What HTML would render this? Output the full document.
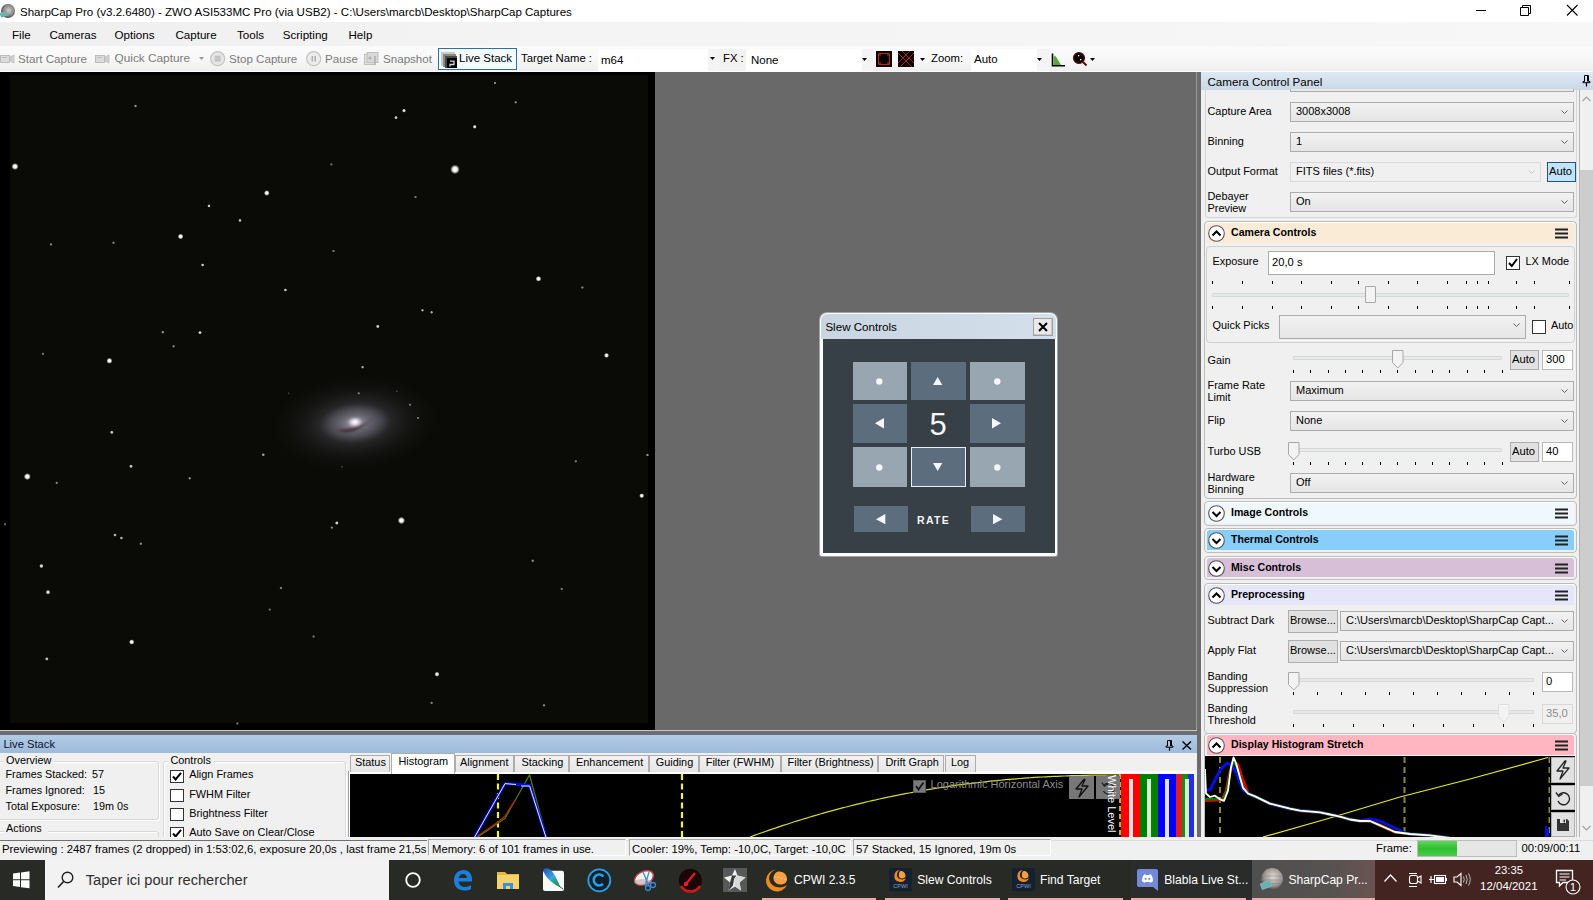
<!DOCTYPE html>
<html><head><meta charset="utf-8"><style>
*{margin:0;padding:0;box-sizing:border-box}
html,body{width:1593px;height:900px;overflow:hidden;background:#f0f0f0;font-family:"Liberation Sans", sans-serif;position:relative}
.t{position:absolute;white-space:nowrap;line-height:1;font-family:"Liberation Sans", sans-serif}
.a{position:absolute}
svg{position:absolute;overflow:visible}
</style></head>
<body>
<div style="position:absolute;left:0px;top:0px;width:1593px;height:22px;background:#fff"></div><svg style="left:0;top:3px" width="16" height="16"><defs><radialGradient id="pl" cx="55%" cy="45%" r="60%"><stop offset="0" stop-color="#cfcfcf"/><stop offset="0.6" stop-color="#8a8a8a"/><stop offset="1" stop-color="#3a3a3a"/></radialGradient></defs><circle cx="8" cy="8" r="7" fill="url(#pl)"/><rect x="0" y="9" width="7" height="5" fill="#6fb3a8" transform="rotate(-20 3 11)"/></svg><div class="t" style="left:20px;top:6.94px;font-size:11.55px;color:#000;">SharpCap Pro (v3.2.6480) - ZWO ASI533MC Pro (via USB2) - C:\Users\marcb\Desktop\SharpCap Captures</div><div style="position:absolute;left:1476px;top:10px;width:10px;height:1px;background:#000"></div><svg style="left:1520px;top:5px" width="12" height="11"><path d="M0.5 2.5h8v8h-8z M2.5 2.5v-2h8v8h-2" fill="none" stroke="#000" stroke-width="1"/></svg><svg style="left:1567px;top:5px" width="11" height="11"><path d="M0 0L10.5 10.5M10.5 0L0 10.5" stroke="#000" stroke-width="1.1"/></svg><div style="position:absolute;left:0px;top:22px;width:1593px;height:24px;background:linear-gradient(90deg,#efefef,#f4f4f4 40%,#f7f7f7)"></div><div class="t" style="left:12px;top:29.24px;font-size:11.6px;color:#000;">File</div><div class="t" style="left:49.5px;top:29.24px;font-size:11.6px;color:#000;">Cameras</div><div class="t" style="left:114.6px;top:29.24px;font-size:11.6px;color:#000;">Options</div><div class="t" style="left:175.4px;top:29.24px;font-size:11.6px;color:#000;">Capture</div><div class="t" style="left:237px;top:29.24px;font-size:11.6px;color:#000;">Tools</div><div class="t" style="left:282.7px;top:29.24px;font-size:11.6px;color:#000;">Scripting</div><div class="t" style="left:348.5px;top:29.24px;font-size:11.6px;color:#000;">Help</div><div style="position:absolute;left:0px;top:46px;width:1593px;height:25px;background:linear-gradient(#fbfbfb,#f8f8f8 50%,#efefef)"></div><div style="position:absolute;left:0px;top:71px;width:1593px;height:1px;background:#fdfdfd"></div><svg style="left:0px;top:53px" width="15" height="12"><rect x="0.5" y="2.5" width="9" height="7" fill="#dcdcdc" stroke="#bdbdbd"/><path d="M10 4l4-2v8l-4-2z" fill="#cfcfcf" stroke="#bdbdbd" stroke-width="0.8"/><rect x="2" y="4" width="5" height="1" fill="#bdbdbd"/></svg><div class="t" style="left:18px;top:53.14px;font-size:11.6px;color:#7a7a7a;">Start Capture</div><svg style="left:95px;top:53px" width="15" height="12"><rect x="0.5" y="2.5" width="9" height="7" fill="#dcdcdc" stroke="#bdbdbd"/><path d="M10 4l4-2v8l-4-2z" fill="#cfcfcf" stroke="#bdbdbd" stroke-width="0.8"/><rect x="2" y="4" width="5" height="1" fill="#bdbdbd"/></svg><div class="t" style="left:114.6px;top:53.11px;font-size:11.8px;color:#7a7a7a;">Quick Capture</div><svg style="left:199px;top:57px" width="6" height="4"><path d="M0 0h5l-2.5 3z" fill="#9a9a9a"/></svg><svg style="left:210px;top:51px" width="16" height="16"><circle cx="7.7" cy="7.7" r="7" fill="#e6e6e6" stroke="#c4c4c4" stroke-width="1.2"/><rect x="4.7" y="4.7" width="6" height="6" fill="#c4c4c4"/></svg><div class="t" style="left:229px;top:53.14px;font-size:11.6px;color:#7a7a7a;">Stop Capture</div><svg style="left:306px;top:51px" width="16" height="16"><circle cx="7.7" cy="7.7" r="7" fill="#ececec" stroke="#c4c4c4" stroke-width="1.2"/><rect x="5.5" y="5" width="1.6" height="5.5" fill="#b0b0b0"/><rect x="8.4" y="5" width="1.6" height="5.5" fill="#b0b0b0"/></svg><div class="t" style="left:325px;top:53.14px;font-size:11.6px;color:#7a7a7a;">Pause</div><svg style="left:364px;top:52px" width="15" height="15"><rect x="0.5" y="2.5" width="11" height="10" fill="#e0e0e0" stroke="#c0c0c0"/><rect x="3" y="0.5" width="11" height="10" fill="#d8d8d8" stroke="#c0c0c0"/><rect x="10" y="4" width="2" height="9" fill="#b8b8b8"/><circle cx="6" cy="6" r="1.5" fill="#b0b0b0"/></svg><div class="t" style="left:383px;top:53.14px;font-size:11.6px;color:#7a7a7a;">Snapshot</div><div style="position:absolute;left:438px;top:48px;width:79px;height:22px;background:#f3fbfd;border:1px solid #2e6fa5"></div><svg style="left:441px;top:52px" width="16" height="16"><rect x="0" y="0" width="14" height="14" fill="#c8c8c8"/><rect x="2" y="2" width="13" height="13" fill="#8a8a8a"/><rect x="4" y="4" width="12" height="12" fill="#4a4a4a"/><rect x="6" y="6" width="10" height="10" fill="#000"/><path d="M9 9.2h4v3.3h-4v2" fill="none" stroke="#d8d8d8" stroke-width="1.3"/></svg><div class="t" style="left:459px;top:53.15px;font-size:11.5px;color:#000;">Live Stack</div><div class="t" style="left:521px;top:53.17px;font-size:11.3px;color:#000;">Target Name :</div><div style="position:absolute;left:598px;top:49px;width:121px;height:22px;background:#fff"></div><div style="position:absolute;left:708px;top:49px;width:11px;height:22px;background:#f4f4f4"></div><div class="t" style="left:601px;top:54.95px;font-size:11.5px;color:#000;">m64</div><svg style="left:710px;top:57px" width="6" height="4"><path d="M0 0h5l-2.5 3z" fill="#000"/></svg><div style="position:absolute;left:719px;top:49px;width:27px;height:22px;background:#f2f2f2"></div><div class="t" style="left:723px;top:53.17px;font-size:11.3px;color:#000;">FX :</div><div style="position:absolute;left:746px;top:49px;width:127px;height:22px;background:#fff"></div><div style="position:absolute;left:862px;top:49px;width:11px;height:22px;background:#f4f4f4"></div><div class="t" style="left:751px;top:54.95px;font-size:11.5px;color:#000;">None</div><svg style="left:862px;top:58px" width="6" height="4"><path d="M0 0h5l-2.5 3z" fill="#000"/></svg><svg style="left:876px;top:51px" width="16" height="16"><rect x="0" y="0" width="16" height="16" fill="#000"/><path d="M2.6 2.6h10.8v10.8h-10.8z" fill="none" stroke="#d42a2a" stroke-width="1"/><rect x="3.3" y="3.3" width="1.4" height="1.4" fill="#d42a2a"/><rect x="11.3" y="3.3" width="1.4" height="1.4" fill="#d42a2a"/><rect x="3.3" y="11.3" width="1.4" height="1.4" fill="#d42a2a"/><rect x="11.3" y="11.3" width="1.4" height="1.4" fill="#d42a2a"/></svg><svg style="left:898px;top:51px" width="16" height="16"><rect x="0" y="0" width="16" height="16" fill="#000"/><path d="M0 2L14 16M4 0L16 12M16 2L2 16M12 0L0 12" fill="none" stroke="#c42020" stroke-width="0.9"/></svg><svg style="left:920px;top:58px" width="6" height="4"><path d="M0 0h5l-2.5 3z" fill="#000"/></svg><div class="t" style="left:931px;top:53.17px;font-size:11.3px;color:#000;">Zoom:</div><div style="position:absolute;left:971px;top:49px;width:79px;height:22px;background:#fff"></div><div style="position:absolute;left:1037px;top:49px;width:13px;height:22px;background:#f4f4f4"></div><div class="t" style="left:974px;top:54.25px;font-size:11.5px;color:#000;">Auto</div><svg style="left:1037px;top:58px" width="6" height="4"><path d="M0 0h5l-2.5 3z" fill="#000"/></svg><svg style="left:1051px;top:52px" width="15" height="15"><path d="M1.5 1.5V13.8H14" fill="none" stroke="#000" stroke-width="1.6"/><path d="M2.5 13V5.5L4 3.5L5.5 5.5L10 13z" fill="#5aa83a"/></svg><svg style="left:1073px;top:52px" width="15" height="15"><circle cx="6" cy="6" r="5.5" fill="#000" stroke="#6a0a0a" stroke-width="1.2"/><rect x="5" y="3" width="1.3" height="1.3" fill="#fff"/><rect x="7" y="7" width="1.3" height="1.3" fill="#fff"/><path d="M10 10L13.5 13.5" stroke="#5a0808" stroke-width="2"/></svg><svg style="left:1090px;top:58px" width="6" height="4"><path d="M0 0h5l-2.5 3z" fill="#000"/></svg><div style="position:absolute;left:0px;top:72px;width:655px;height:658px;background:#000"></div><div style="position:absolute;left:10px;top:75px;width:638px;height:648px;background:#0a0a06"></div><svg style="left:0;top:0" width="655" height="730"><defs><radialGradient id="sg"><stop offset="0" stop-color="#fff"/><stop offset="0.45" stop-color="#f4f4f4"/><stop offset="1" stop-color="#fff" stop-opacity="0"/></radialGradient><radialGradient id="gh" cx="50%" cy="50%" r="50%"><stop offset="0" stop-color="#8a8690" stop-opacity="0.45"/><stop offset="0.4" stop-color="#5c5860" stop-opacity="0.25"/><stop offset="1" stop-color="#2a2628" stop-opacity="0"/></radialGradient><radialGradient id="gi" cx="50%" cy="50%" r="50%"><stop offset="0" stop-color="#f0eef2"/><stop offset="0.15" stop-color="#b8b0bc"/><stop offset="0.6" stop-color="#8a8296" stop-opacity="0.55"/><stop offset="0.8" stop-color="#8a8298" stop-opacity="0.45"/><stop offset="1" stop-color="#706878" stop-opacity="0"/></radialGradient><filter id="bl" x="-50%" y="-50%" width="200%" height="200%"><feGaussianBlur stdDeviation="1.2"/></filter></defs><defs><radialGradient id="g1"><stop offset="0" stop-color="#8e8c9c" stop-opacity="0.55"/><stop offset="0.35" stop-color="#6e6c7c" stop-opacity="0.35"/><stop offset="0.7" stop-color="#40404a" stop-opacity="0.15"/><stop offset="1" stop-color="#202028" stop-opacity="0"/></radialGradient><radialGradient id="g2"><stop offset="0" stop-color="#d0ccd8" stop-opacity="0.85"/><stop offset="0.4" stop-color="#a8a4b4" stop-opacity="0.5"/><stop offset="0.7" stop-color="#9894a8" stop-opacity="0.3"/><stop offset="1" stop-color="#807c90" stop-opacity="0"/></radialGradient></defs><g transform="translate(355 423) rotate(-5)"><ellipse cx="0" cy="0" rx="85" ry="48" fill="url(#g1)"/><ellipse cx="0" cy="0" rx="36" ry="20" fill="url(#g2)" opacity="0.75"/><path d="M-19 5 Q-2 15 19 -4 Q5 8 -19 5z" fill="#3e2026" opacity="0.85" filter="url(#bl)"/><ellipse cx="0" cy="-1" rx="6.5" ry="4" fill="#e8e4ee" opacity="0.6" filter="url(#bl)"/><ellipse cx="0" cy="-1" rx="3" ry="2.2" fill="#fff" filter="url(#bl)"/></g><circle cx="15" cy="166.5" r="3.52" fill="url(#sg)" opacity="1"/><circle cx="455" cy="169.4" r="4.80" fill="url(#sg)" opacity="1"/><circle cx="266.8" cy="193" r="2.88" fill="url(#sg)" opacity="1"/><circle cx="180.6" cy="236.5" r="2.88" fill="url(#sg)" opacity="1"/><circle cx="538.5" cy="278.8" r="2.88" fill="url(#sg)" opacity="1"/><circle cx="109.4" cy="360.8" r="3.04" fill="url(#sg)" opacity="1"/><circle cx="606.5" cy="355.4" r="2.56" fill="url(#sg)" opacity="1"/><circle cx="404" cy="110.6" r="2.08" fill="url(#sg)" opacity="0.9"/><circle cx="396" cy="117.6" r="1.92" fill="url(#sg)" opacity="0.8"/><circle cx="474.7" cy="126.8" r="2.08" fill="url(#sg)" opacity="0.9"/><circle cx="135.5" cy="106" r="1.60" fill="url(#sg)" opacity="0.6"/><circle cx="495" cy="83" r="1.60" fill="url(#sg)" opacity="0.5"/><circle cx="515.7" cy="102.3" r="1.60" fill="url(#sg)" opacity="0.5"/><circle cx="209" cy="205.9" r="1.76" fill="url(#sg)" opacity="0.8"/><circle cx="240" cy="220.4" r="1.76" fill="url(#sg)" opacity="0.8"/><circle cx="202.6" cy="265" r="1.76" fill="url(#sg)" opacity="0.8"/><circle cx="285.4" cy="290" r="1.76" fill="url(#sg)" opacity="0.8"/><circle cx="377.8" cy="326.4" r="1.92" fill="url(#sg)" opacity="0.85"/><circle cx="422.5" cy="310.3" r="1.60" fill="url(#sg)" opacity="0.7"/><circle cx="431.6" cy="312.3" r="1.60" fill="url(#sg)" opacity="0.7"/><circle cx="200" cy="332.6" r="1.92" fill="url(#sg)" opacity="0.85"/><circle cx="162.8" cy="332.2" r="1.60" fill="url(#sg)" opacity="0.6"/><circle cx="173.6" cy="346.3" r="1.60" fill="url(#sg)" opacity="0.5"/><circle cx="582.4" cy="287.5" r="1.60" fill="url(#sg)" opacity="0.5"/><circle cx="51" cy="244.4" r="1.60" fill="url(#sg)" opacity="0.5"/><circle cx="113.5" cy="242.7" r="1.60" fill="url(#sg)" opacity="0.5"/><circle cx="415.5" cy="197" r="1.60" fill="url(#sg)" opacity="0.45"/><circle cx="333.5" cy="251" r="1.60" fill="url(#sg)" opacity="0.45"/><circle cx="331.4" cy="164.4" r="1.60" fill="url(#sg)" opacity="0.4"/><circle cx="362.5" cy="367" r="1.60" fill="url(#sg)" opacity="0.4"/><circle cx="43" cy="353.8" r="1.60" fill="url(#sg)" opacity="0.45"/><circle cx="27.3" cy="476.6" r="3.52" fill="url(#sg)" opacity="1"/><circle cx="401.4" cy="520.5" r="3.68" fill="url(#sg)" opacity="1"/><circle cx="641.7" cy="495.7" r="2.56" fill="url(#sg)" opacity="0.95"/><circle cx="131.7" cy="642" r="2.72" fill="url(#sg)" opacity="1"/><circle cx="437" cy="674.2" r="2.56" fill="url(#sg)" opacity="0.95"/><circle cx="48" cy="592.2" r="2.40" fill="url(#sg)" opacity="0.9"/><circle cx="41.4" cy="566" r="2.24" fill="url(#sg)" opacity="0.85"/><circle cx="111.8" cy="432.3" r="1.92" fill="url(#sg)" opacity="0.8"/><circle cx="131" cy="466.3" r="1.92" fill="url(#sg)" opacity="0.8"/><circle cx="189.7" cy="478.3" r="1.60" fill="url(#sg)" opacity="0.55"/><circle cx="56.7" cy="482.8" r="1.60" fill="url(#sg)" opacity="0.5"/><circle cx="336.8" cy="523" r="1.92" fill="url(#sg)" opacity="0.85"/><circle cx="331.8" cy="527.6" r="1.60" fill="url(#sg)" opacity="0.5"/><circle cx="115" cy="535" r="1.76" fill="url(#sg)" opacity="0.75"/><circle cx="121.4" cy="538" r="1.76" fill="url(#sg)" opacity="0.7"/><circle cx="140.8" cy="543.7" r="1.60" fill="url(#sg)" opacity="0.55"/><circle cx="532.7" cy="560.7" r="1.60" fill="url(#sg)" opacity="0.55"/><circle cx="561.7" cy="588.9" r="1.60" fill="url(#sg)" opacity="0.45"/><circle cx="280.9" cy="588" r="1.60" fill="url(#sg)" opacity="0.5"/><circle cx="647.5" cy="455" r="1.60" fill="url(#sg)" opacity="0.6"/><circle cx="575.8" cy="461.3" r="1.60" fill="url(#sg)" opacity="0.45"/><circle cx="263.3" cy="454.7" r="1.76" fill="url(#sg)" opacity="0.6"/><circle cx="46.8" cy="658.9" r="1.92" fill="url(#sg)" opacity="0.75"/><circle cx="313.6" cy="636.5" r="1.60" fill="url(#sg)" opacity="0.45"/><circle cx="544" cy="705.3" r="1.60" fill="url(#sg)" opacity="0.55"/><circle cx="431.6" cy="702.8" r="1.60" fill="url(#sg)" opacity="0.5"/><circle cx="237.4" cy="723.5" r="1.60" fill="url(#sg)" opacity="0.45"/><circle cx="269.7" cy="609.6" r="1.60" fill="url(#sg)" opacity="0.4"/><circle cx="5" cy="524.3" r="1.60" fill="url(#sg)" opacity="0.4"/><circle cx="362.7" cy="367.3" r="1.60" fill="url(#sg)" opacity="0.45"/><circle cx="358.7" cy="393.3" r="1.60" fill="url(#sg)" opacity="0.4"/><circle cx="410" cy="404.7" r="1.60" fill="url(#sg)" opacity="0.4"/><circle cx="418" cy="418" r="1.60" fill="url(#sg)" opacity="0.4"/><circle cx="288.7" cy="393.3" r="1.28" fill="url(#sg)" opacity="0.2"/><circle cx="342" cy="466.7" r="1.28" fill="url(#sg)" opacity="0.2"/><circle cx="396.7" cy="391.3" r="1.28" fill="url(#sg)" opacity="0.2"/></svg><div style="position:absolute;left:655px;top:72px;width:541px;height:658px;background:#696969"></div><div style="position:absolute;left:1196px;top:72px;width:1px;height:658px;background:#9a9a9a"></div><div style="position:absolute;left:1197px;top:72px;width:4px;height:765px;background:#6b6b6b"></div><div style="position:absolute;left:0px;top:730px;width:1197px;height:1px;background:#c8c8c8"></div><div style="position:absolute;left:0px;top:731px;width:1197px;height:4px;background:#6a6e72"></div><div style="position:absolute;left:820px;top:313px;width:237px;height:243px;background:#fff;border-radius:7px 7px 2px 2px;box-shadow:0 0 0 1px #9aa3ab"></div><div style="position:absolute;left:821px;top:314px;width:235px;height:25px;background:linear-gradient(90deg,#c9d5e1,#d3dfeb);border-radius:6px 6px 0 0"></div><div class="t" style="left:825.4px;top:321.14px;font-size:11.6px;color:#000;">Slew Controls</div><div style="position:absolute;left:1033px;top:318px;width:20px;height:18px;background:#e9e9e9;border:1px solid #a0a0a0;box-shadow:inset -1px -1px 0 #c8c8c8"></div><svg style="left:1038px;top:322px" width="10" height="10"><path d="M1 1L9 9M9 1L1 9" stroke="#000" stroke-width="2"/></svg><div style="position:absolute;left:823px;top:339px;width:232px;height:214px;background:#373f47"></div><div style="position:absolute;left:853px;top:362px;width:54px;height:38px;background:#97a6b1"></div><svg style="left:876.0px;top:377.5px" width="8" height="8"><circle cx="3.3" cy="3.5" r="3.2" fill="#f4f6f8"/></svg><div style="position:absolute;left:853px;top:404px;width:54px;height:39px;background:#5c6e7e"></div><svg style="left:874.5px;top:418.2px" width="9" height="10.5"><path d="M9 0L9 10.5L0 5.25z" fill="#f4f6f8"/></svg><div style="position:absolute;left:853px;top:447px;width:54px;height:40px;background:#97a6b1"></div><svg style="left:876.0px;top:463.5px" width="8" height="8"><circle cx="3.3" cy="3.5" r="3.2" fill="#f4f6f8"/></svg><div style="position:absolute;left:911px;top:362px;width:55px;height:38px;background:#5c6e7e"></div><svg style="left:932.9px;top:377.0px" width="9.3" height="8"><path d="M0 8L4.65 0L9.3 8z" fill="#f4f6f8"/></svg><div style="position:absolute;left:911px;top:447px;width:55px;height:40px;background:#5c6e7e;border:1px solid #e8eef4"></div><svg style="left:932.9px;top:463.0px" width="9.3" height="8"><path d="M0 0L9.3 0L4.65 8z" fill="#f4f6f8"/></svg><div style="position:absolute;left:970px;top:362px;width:55px;height:38px;background:#97a6b1"></div><svg style="left:993.5px;top:377.5px" width="8" height="8"><circle cx="3.3" cy="3.5" r="3.2" fill="#f4f6f8"/></svg><div style="position:absolute;left:970px;top:404px;width:55px;height:39px;background:#5c6e7e"></div><svg style="left:992.0px;top:418.2px" width="9" height="10.5"><path d="M0 0L9 5.25L0 10.5z" fill="#f4f6f8"/></svg><div style="position:absolute;left:970px;top:447px;width:55px;height:40px;background:#97a6b1"></div><svg style="left:993.5px;top:463.5px" width="8" height="8"><circle cx="3.3" cy="3.5" r="3.2" fill="#f4f6f8"/></svg><div class="t" style="left:929.5px;top:408.86px;font-size:31px;color:#f4f6f8;">5</div><div style="position:absolute;left:854px;top:506px;width:54px;height:26px;background:#5c6e7e"></div><div style="position:absolute;left:971px;top:506px;width:54px;height:26px;background:#5c6e7e"></div><svg style="left:876px;top:513.5px" width="10" height="11"><path d="M9.3 0L9.3 10.3L0 5.15z" fill="#f4f6f8"/></svg><svg style="left:992.5px;top:513.5px" width="10" height="11"><path d="M0 0L9.3 5.15L0 10.3z" fill="#f4f6f8"/></svg><div class="t" style="left:917px;top:514.77px;font-size:10.5px;color:#f4f6f8;font-weight:bold;letter-spacing:1.3px">RATE</div><div style="position:absolute;left:1201px;top:72px;width:392px;height:765px;background:#f0f0f0"></div><div style="position:absolute;left:1201px;top:72px;width:392px;height:18px;background:linear-gradient(#dfe9f4,#c9d7e6)"></div><div class="t" style="left:1207.5px;top:76.44px;font-size:11.6px;color:#000;">Camera Control Panel</div><svg style="left:1582px;top:75px" width="9" height="12"><path d="M2.5 0.5h4v6h1.5v1.2h-7V6.5h1.5z" fill="none" stroke="#000" stroke-width="1"/><rect x="5" y="1" width="1.3" height="5.5" fill="#000"/><path d="M4.5 7.7v3.8" stroke="#000" stroke-width="1.2"/></svg><div style="position:absolute;left:1579px;top:90px;width:14px;height:747px;background:#f0f0f0"></div><div style="position:absolute;left:1580px;top:170px;width:13px;height:616px;background:#cdcdcd"></div><div style="position:absolute;left:1579px;top:90px;width:1px;height:747px;background:#b4b4b4"></div><svg style="left:1582px;top:96px" width="9" height="6"><path d="M0.5 5L4.5 1L8.5 5" fill="none" stroke="#a0a0a0" stroke-width="1.1"/></svg><svg style="left:1582px;top:825px" width="9" height="6"><path d="M0.5 1L4.5 5L8.5 1" fill="none" stroke="#a0a0a0" stroke-width="1.1"/></svg><div style="position:absolute;left:1205px;top:89px;width:372px;height:129px;border:1px solid #d5d5d5;border-top:none;border-radius:0 0 3px 3px"></div><div style="position:absolute;left:1290px;top:89px;width:284px;height:3px;border:1px solid #acacac;border-top:none;background:#e8e8e8"></div><div class="t" style="left:1207.5px;top:106.22px;font-size:10.9px;color:#000;">Capture Area</div><div style="position:absolute;left:1290px;top:102px;width:284px;height:20px;background:linear-gradient(#f2f2f2,#e5e5e5);border:1px solid #acacac"></div><div class="t" style="left:1296px;top:106.21px;font-size:11px;color:#000;">3008x3008</div><svg style="left:1561px;top:110px" width="8" height="5"><path d="M0.5 0.5L3.5 3.5L6.5 0.5" fill="none" stroke="#606060" stroke-width="1"/></svg><div class="t" style="left:1207.5px;top:136.22px;font-size:10.9px;color:#000;">Binning</div><div style="position:absolute;left:1290px;top:132px;width:284px;height:20px;background:linear-gradient(#f2f2f2,#e5e5e5);border:1px solid #acacac"></div><div class="t" style="left:1296px;top:136.21px;font-size:11px;color:#000;">1</div><svg style="left:1561px;top:140px" width="8" height="5"><path d="M0.5 0.5L3.5 3.5L6.5 0.5" fill="none" stroke="#606060" stroke-width="1"/></svg><div class="t" style="left:1207.5px;top:166.22px;font-size:10.9px;color:#000;">Output Format</div><div style="position:absolute;left:1290px;top:162px;width:251px;height:20px;background:#f0f0f0;border:1px solid #dadada"></div><div class="t" style="left:1296px;top:166.21px;font-size:11px;color:#000;">FITS files (*.fits)</div><svg style="left:1528px;top:170px" width="8" height="5"><path d="M0.5 0.5L3.5 3.5L6.5 0.5" fill="none" stroke="#c8c8c8" stroke-width="1"/></svg><div style="position:absolute;left:1547px;top:162px;width:29px;height:20px;background:#c2e4f8;border:1px solid #26537c"></div><div class="t" style="left:1549px;top:165.98px;font-size:11.2px;color:#000;">Auto</div><div class="t" style="left:1207.5px;top:191.22px;font-size:10.9px;color:#000;">Debayer</div><div class="t" style="left:1207.5px;top:203.22px;font-size:10.9px;color:#000;">Preview</div><div style="position:absolute;left:1290px;top:192px;width:284px;height:20px;background:linear-gradient(#f2f2f2,#e5e5e5);border:1px solid #acacac"></div><div class="t" style="left:1296px;top:196.21px;font-size:11px;color:#000;">On</div><svg style="left:1561px;top:200px" width="8" height="5"><path d="M0.5 0.5L3.5 3.5L6.5 0.5" fill="none" stroke="#606060" stroke-width="1"/></svg><div style="position:absolute;left:1204px;top:221px;width:373px;height:278px;border:1px solid #bcbcbc;border-radius:4px;background:#f0f0f0;box-shadow:inset 0 1px 0 #fff"></div><div style="position:absolute;left:1207px;top:223px;width:367px;height:20px;background:#faebd7;border-radius:3px 3px 0 0"></div><svg style="left:1208px;top:224.5px" width="17" height="17"><circle cx="8.5" cy="8.5" r="7.8" fill="#fff" stroke="#555" stroke-width="1.1"/><path d="M4.5 10.5L8.5 6.5L12.5 10.5" fill="none" stroke="#000" stroke-width="2"/></svg><div class="t" style="left:1231px;top:227.25px;font-size:10.6px;color:#000;font-weight:bold;">Camera Controls</div><svg style="left:1555px;top:228px" width="14" height="11"><rect x="0" y="0.5" width="13" height="2" fill="#222"/><rect x="0" y="4.5" width="13" height="2" fill="#222"/><rect x="0" y="8.5" width="13" height="2" fill="#222"/></svg><div style="position:absolute;left:1206px;top:246px;width:369px;height:97px;border:1px solid #d0d0d0;border-radius:4px;background:#f0f0f0"></div><div class="t" style="left:1212.5px;top:256.22px;font-size:10.9px;color:#000;">Exposure</div><div style="position:absolute;left:1268px;top:251px;width:227px;height:24px;background:#fff;border:1px solid #ababab"></div><div class="t" style="left:1272px;top:257.18px;font-size:11.2px;color:#000;">20,0 s</div><div style="position:absolute;left:1506px;top:256px;width:14px;height:14px;background:#fff;border:1px solid #333"></div><svg style="left:1507px;top:257px" width="12" height="12"><path d="M2 6L4.8 9L10 2" fill="none" stroke="#000" stroke-width="2"/></svg><div class="t" style="left:1525.5px;top:256.22px;font-size:10.9px;color:#000;">LX Mode</div><svg style="left:0;top:0" width="1593" height="900"><rect x="1212" y="281" width="1" height="3" fill="#000"/><rect x="1242" y="281" width="1" height="3" fill="#000"/><rect x="1272" y="281" width="1" height="3" fill="#000"/><rect x="1301" y="281" width="1" height="3" fill="#000"/><rect x="1331" y="281" width="1" height="3" fill="#000"/><rect x="1358" y="281" width="1" height="3" fill="#000"/><rect x="1388" y="281" width="1" height="3" fill="#000"/><rect x="1417" y="281" width="1" height="3" fill="#000"/><rect x="1447" y="281" width="1" height="3" fill="#000"/><rect x="1466" y="281" width="1" height="3" fill="#000"/><rect x="1477" y="281" width="1" height="3" fill="#000"/><rect x="1488" y="281" width="1" height="3" fill="#000"/><rect x="1516" y="281" width="1" height="3" fill="#000"/><rect x="1534" y="281" width="1" height="3" fill="#000"/><rect x="1569" y="281" width="1" height="3" fill="#000"/></svg><svg style="left:0;top:0" width="1593" height="900"><rect x="1212" y="306" width="1" height="3" fill="#000"/><rect x="1242" y="306" width="1" height="3" fill="#000"/><rect x="1272" y="306" width="1" height="3" fill="#000"/><rect x="1301" y="306" width="1" height="3" fill="#000"/><rect x="1331" y="306" width="1" height="3" fill="#000"/><rect x="1358" y="306" width="1" height="3" fill="#000"/><rect x="1388" y="306" width="1" height="3" fill="#000"/><rect x="1417" y="306" width="1" height="3" fill="#000"/><rect x="1447" y="306" width="1" height="3" fill="#000"/><rect x="1466" y="306" width="1" height="3" fill="#000"/><rect x="1477" y="306" width="1" height="3" fill="#000"/><rect x="1488" y="306" width="1" height="3" fill="#000"/><rect x="1516" y="306" width="1" height="3" fill="#000"/><rect x="1534" y="306" width="1" height="3" fill="#000"/><rect x="1569" y="306" width="1" height="3" fill="#000"/></svg><div style="position:absolute;left:1212px;top:293px;width:357px;height:4px;background:#e7eaea;border:1px solid #d6d6d6;border-radius:1px"></div><div style="position:absolute;left:1365px;top:286px;width:11px;height:17px;background:#f3f3f3;border:1px solid #a8a8a8;border-radius:1px"></div><div class="t" style="left:1212.5px;top:320.42px;font-size:10.9px;color:#000;">Quick Picks</div><div style="position:absolute;left:1279px;top:315px;width:247px;height:24px;background:linear-gradient(#f2f2f2,#e5e5e5);border:1px solid #acacac"></div><div class="t" style="left:1285px;top:319.21px;font-size:11px;color:#000;"></div><svg style="left:1513px;top:323px" width="8" height="5"><path d="M0.5 0.5L3.5 3.5L6.5 0.5" fill="none" stroke="#606060" stroke-width="1"/></svg><div style="position:absolute;left:1532px;top:320px;width:14px;height:14px;background:#fff;border:1px solid #333"></div><div class="t" style="left:1551px;top:320.42px;font-size:10.9px;color:#000;">Auto</div><div class="t" style="left:1207.5px;top:354.52px;font-size:10.9px;color:#000;">Gain</div><div style="position:absolute;left:1293px;top:356px;width:209px;height:4px;background:#e7eaea;border:1px solid #d6d6d6;border-radius:1px"></div><svg style="left:0;top:0" width="1593" height="900"><rect x="1293" y="370" width="1" height="3" fill="#000"/><rect x="1310" y="370" width="1" height="3" fill="#000"/><rect x="1328" y="370" width="1" height="3" fill="#000"/><rect x="1345" y="370" width="1" height="3" fill="#000"/><rect x="1362" y="370" width="1" height="3" fill="#000"/><rect x="1380" y="370" width="1" height="3" fill="#000"/><rect x="1397" y="370" width="1" height="3" fill="#000"/><rect x="1415" y="370" width="1" height="3" fill="#000"/><rect x="1432" y="370" width="1" height="3" fill="#000"/><rect x="1449" y="370" width="1" height="3" fill="#000"/><rect x="1467" y="370" width="1" height="3" fill="#000"/><rect x="1484" y="370" width="1" height="3" fill="#000"/><rect x="1502" y="370" width="1" height="3" fill="#000"/></svg><svg style="left:1392px;top:350px" width="12" height="19"><path d="M0.5 0.5h10.5v12L5.75 18L0.5 12.5z" fill="#f3f3f3" stroke="#a8a8a8" stroke-width="1"/></svg><div style="position:absolute;left:1510px;top:350px;width:29px;height:20px;background:#e1e1e1;border:1px solid #adadad"></div><div class="t" style="left:1512px;top:353.98px;font-size:11.2px;color:#000;">Auto</div><div style="position:absolute;left:1542px;top:350px;width:31px;height:20px;background:#fff;border:1px solid #b8b8b8"></div><div class="t" style="left:1546px;top:353.98px;font-size:11.2px;color:#000;">300</div><div class="t" style="left:1207.5px;top:379.72px;font-size:10.9px;color:#000;">Frame Rate</div><div class="t" style="left:1207.5px;top:391.52px;font-size:10.9px;color:#000;">Limit</div><div style="position:absolute;left:1290px;top:381px;width:284px;height:20px;background:linear-gradient(#f2f2f2,#e5e5e5);border:1px solid #acacac"></div><div class="t" style="left:1296px;top:385.21px;font-size:11px;color:#000;">Maximum</div><svg style="left:1561px;top:389px" width="8" height="5"><path d="M0.5 0.5L3.5 3.5L6.5 0.5" fill="none" stroke="#606060" stroke-width="1"/></svg><div class="t" style="left:1207.5px;top:414.52px;font-size:10.9px;color:#000;">Flip</div><div style="position:absolute;left:1290px;top:411px;width:284px;height:20px;background:linear-gradient(#f2f2f2,#e5e5e5);border:1px solid #acacac"></div><div class="t" style="left:1296px;top:415.21px;font-size:11px;color:#000;">None</div><svg style="left:1561px;top:419px" width="8" height="5"><path d="M0.5 0.5L3.5 3.5L6.5 0.5" fill="none" stroke="#606060" stroke-width="1"/></svg><div class="t" style="left:1207.5px;top:446.22px;font-size:10.9px;color:#000;">Turbo USB</div><div style="position:absolute;left:1293px;top:448px;width:209px;height:4px;background:#e7eaea;border:1px solid #d6d6d6;border-radius:1px"></div><svg style="left:0;top:0" width="1593" height="900"><rect x="1293" y="462" width="1" height="3" fill="#000"/><rect x="1310" y="462" width="1" height="3" fill="#000"/><rect x="1328" y="462" width="1" height="3" fill="#000"/><rect x="1345" y="462" width="1" height="3" fill="#000"/><rect x="1362" y="462" width="1" height="3" fill="#000"/><rect x="1380" y="462" width="1" height="3" fill="#000"/><rect x="1397" y="462" width="1" height="3" fill="#000"/><rect x="1415" y="462" width="1" height="3" fill="#000"/><rect x="1432" y="462" width="1" height="3" fill="#000"/><rect x="1449" y="462" width="1" height="3" fill="#000"/><rect x="1467" y="462" width="1" height="3" fill="#000"/><rect x="1484" y="462" width="1" height="3" fill="#000"/><rect x="1502" y="462" width="1" height="3" fill="#000"/></svg><svg style="left:1288px;top:442px" width="12" height="19"><path d="M0.5 0.5h10.5v12L5.75 18L0.5 12.5z" fill="#f3f3f3" stroke="#a8a8a8" stroke-width="1"/></svg><div style="position:absolute;left:1510px;top:442px;width:29px;height:20px;background:#e1e1e1;border:1px solid #adadad"></div><div class="t" style="left:1512px;top:445.98px;font-size:11.2px;color:#000;">Auto</div><div style="position:absolute;left:1542px;top:442px;width:31px;height:20px;background:#fff;border:1px solid #b8b8b8"></div><div class="t" style="left:1546px;top:445.98px;font-size:11.2px;color:#000;">40</div><div class="t" style="left:1207.5px;top:472.02px;font-size:10.9px;color:#000;">Hardware</div><div class="t" style="left:1207.5px;top:484.02px;font-size:10.9px;color:#000;">Binning</div><div style="position:absolute;left:1290px;top:473px;width:284px;height:20px;background:linear-gradient(#f2f2f2,#e5e5e5);border:1px solid #acacac"></div><div class="t" style="left:1296px;top:477.21px;font-size:11px;color:#000;">Off</div><svg style="left:1561px;top:481px" width="8" height="5"><path d="M0.5 0.5L3.5 3.5L6.5 0.5" fill="none" stroke="#606060" stroke-width="1"/></svg><div style="position:absolute;left:1204px;top:501px;width:373px;height:25px;border:1px solid #bcbcbc;border-radius:4px;background:#f0f0f0;box-shadow:inset 0 1px 0 #fff"></div><div style="position:absolute;left:1207px;top:503px;width:367px;height:20px;background:#f0f8ff;border-radius:3px 3px 0 0"></div><svg style="left:1208px;top:504.5px" width="17" height="17"><circle cx="8.5" cy="8.5" r="7.8" fill="#fff" stroke="#555" stroke-width="1.1"/><path d="M4.5 7L8.5 11L12.5 7" fill="none" stroke="#000" stroke-width="2"/></svg><div class="t" style="left:1231px;top:507.25px;font-size:10.6px;color:#000;font-weight:bold;">Image Controls</div><svg style="left:1555px;top:508px" width="14" height="11"><rect x="0" y="0.5" width="13" height="2" fill="#222"/><rect x="0" y="4.5" width="13" height="2" fill="#222"/><rect x="0" y="8.5" width="13" height="2" fill="#222"/></svg><div style="position:absolute;left:1204px;top:528px;width:373px;height:25px;border:1px solid #bcbcbc;border-radius:4px;background:#f0f0f0;box-shadow:inset 0 1px 0 #fff"></div><div style="position:absolute;left:1207px;top:530px;width:367px;height:20px;background:#87cefa;border-radius:3px 3px 0 0"></div><svg style="left:1208px;top:531.5px" width="17" height="17"><circle cx="8.5" cy="8.5" r="7.8" fill="#fff" stroke="#555" stroke-width="1.1"/><path d="M4.5 7L8.5 11L12.5 7" fill="none" stroke="#000" stroke-width="2"/></svg><div class="t" style="left:1231px;top:534.25px;font-size:10.6px;color:#000;font-weight:bold;">Thermal Controls</div><svg style="left:1555px;top:535px" width="14" height="11"><rect x="0" y="0.5" width="13" height="2" fill="#222"/><rect x="0" y="4.5" width="13" height="2" fill="#222"/><rect x="0" y="8.5" width="13" height="2" fill="#222"/></svg><div style="position:absolute;left:1204px;top:556px;width:373px;height:24px;border:1px solid #bcbcbc;border-radius:4px;background:#f0f0f0;box-shadow:inset 0 1px 0 #fff"></div><div style="position:absolute;left:1207px;top:558px;width:367px;height:19px;background:#d8bfd8;border-radius:3px 3px 0 0"></div><svg style="left:1208px;top:559.5px" width="17" height="17"><circle cx="8.5" cy="8.5" r="7.8" fill="#fff" stroke="#555" stroke-width="1.1"/><path d="M4.5 7L8.5 11L12.5 7" fill="none" stroke="#000" stroke-width="2"/></svg><div class="t" style="left:1231px;top:562.25px;font-size:10.6px;color:#000;font-weight:bold;">Misc Controls</div><svg style="left:1555px;top:563px" width="14" height="11"><rect x="0" y="0.5" width="13" height="2" fill="#222"/><rect x="0" y="4.5" width="13" height="2" fill="#222"/><rect x="0" y="8.5" width="13" height="2" fill="#222"/></svg><div style="position:absolute;left:1204px;top:583px;width:373px;height:151px;border:1px solid #bcbcbc;border-radius:4px;background:#f0f0f0;box-shadow:inset 0 1px 0 #fff"></div><div style="position:absolute;left:1207px;top:585px;width:367px;height:20px;background:#e6e6fa;border-radius:3px 3px 0 0"></div><svg style="left:1208px;top:586.5px" width="17" height="17"><circle cx="8.5" cy="8.5" r="7.8" fill="#fff" stroke="#555" stroke-width="1.1"/><path d="M4.5 10.5L8.5 6.5L12.5 10.5" fill="none" stroke="#000" stroke-width="2"/></svg><div class="t" style="left:1231px;top:589.25px;font-size:10.6px;color:#000;font-weight:bold;">Preprocessing</div><svg style="left:1555px;top:590px" width="14" height="11"><rect x="0" y="0.5" width="13" height="2" fill="#222"/><rect x="0" y="4.5" width="13" height="2" fill="#222"/><rect x="0" y="8.5" width="13" height="2" fill="#222"/></svg><div class="t" style="left:1207.5px;top:615.42px;font-size:10.9px;color:#000;">Subtract Dark</div><div style="position:absolute;left:1288px;top:610px;width:50px;height:23px;background:#e1e1e1;border:1px solid #adadad"></div><div class="t" style="left:1290px;top:615.21px;font-size:11px;color:#000;">Browse...</div><div style="position:absolute;left:1340px;top:611px;width:234px;height:20px;background:linear-gradient(#f2f2f2,#e5e5e5);border:1px solid #acacac"></div><div class="t" style="left:1346px;top:615.21px;font-size:11px;color:#000;">C:\Users\marcb\Desktop\SharpCap Capt...</div><svg style="left:1561px;top:619px" width="8" height="5"><path d="M0.5 0.5L3.5 3.5L6.5 0.5" fill="none" stroke="#606060" stroke-width="1"/></svg><div class="t" style="left:1207.5px;top:645.22px;font-size:10.9px;color:#000;">Apply Flat</div><div style="position:absolute;left:1288px;top:640px;width:50px;height:23px;background:#e1e1e1;border:1px solid #adadad"></div><div class="t" style="left:1290px;top:645.21px;font-size:11px;color:#000;">Browse...</div><div style="position:absolute;left:1340px;top:641px;width:234px;height:20px;background:linear-gradient(#f2f2f2,#e5e5e5);border:1px solid #acacac"></div><div class="t" style="left:1346px;top:645.21px;font-size:11px;color:#000;">C:\Users\marcb\Desktop\SharpCap Capt...</div><svg style="left:1561px;top:649px" width="8" height="5"><path d="M0.5 0.5L3.5 3.5L6.5 0.5" fill="none" stroke="#606060" stroke-width="1"/></svg><div class="t" style="left:1207.5px;top:671.22px;font-size:10.9px;color:#000;">Banding</div><div class="t" style="left:1207.5px;top:683.02px;font-size:10.9px;color:#000;">Suppression</div><div style="position:absolute;left:1289px;top:678px;width:245px;height:4px;background:#e7eaea;border:1px solid #d6d6d6;border-radius:1px"></div><svg style="left:0;top:0" width="1593" height="900"><rect x="1293" y="692" width="1" height="3" fill="#000"/><rect x="1317" y="692" width="1" height="3" fill="#000"/><rect x="1341" y="692" width="1" height="3" fill="#000"/><rect x="1365" y="692" width="1" height="3" fill="#000"/><rect x="1389" y="692" width="1" height="3" fill="#000"/><rect x="1413" y="692" width="1" height="3" fill="#000"/><rect x="1437" y="692" width="1" height="3" fill="#000"/><rect x="1461" y="692" width="1" height="3" fill="#000"/><rect x="1485" y="692" width="1" height="3" fill="#000"/><rect x="1509" y="692" width="1" height="3" fill="#000"/><rect x="1533" y="692" width="1" height="3" fill="#000"/></svg><svg style="left:1288px;top:672px" width="12" height="19"><path d="M0.5 0.5h10.5v12L5.75 18L0.5 12.5z" fill="#f3f3f3" stroke="#a8a8a8" stroke-width="1"/></svg><div style="position:absolute;left:1542px;top:672px;width:31px;height:20px;background:#fff;border:1px solid #b8b8b8"></div><div class="t" style="left:1546px;top:675.98px;font-size:11.2px;color:#000;">0</div><div class="t" style="left:1207.5px;top:703.02px;font-size:10.9px;color:#000;">Banding</div><div class="t" style="left:1207.5px;top:714.72px;font-size:10.9px;color:#000;">Threshold</div><div style="position:absolute;left:1293px;top:710px;width:241px;height:4px;background:#e7eaea;border:1px solid #d6d6d6;border-radius:1px"></div><svg style="left:0;top:0" width="1593" height="900"><rect x="1293" y="724" width="1" height="3" fill="#000"/><rect x="1323" y="724" width="1" height="3" fill="#000"/><rect x="1353" y="724" width="1" height="3" fill="#000"/><rect x="1383" y="724" width="1" height="3" fill="#000"/><rect x="1413" y="724" width="1" height="3" fill="#000"/><rect x="1443" y="724" width="1" height="3" fill="#000"/><rect x="1473" y="724" width="1" height="3" fill="#000"/><rect x="1503" y="724" width="1" height="3" fill="#000"/><rect x="1533" y="724" width="1" height="3" fill="#000"/></svg><svg style="left:1498px;top:704px" width="12" height="19"><path d="M0.5 0.5h10.5v12L5.75 18L0.5 12.5z" fill="#f3f3f3" stroke="#e0e0e0" stroke-width="1"/></svg><div style="position:absolute;left:1542px;top:704px;width:31px;height:20px;background:#f0f0f0;border:1px solid #d8d8d8"></div><div class="t" style="left:1546px;top:707.98px;font-size:11.2px;color:#8c8c8c;">35,0</div><div style="position:absolute;left:1204px;top:733px;width:373px;height:110px;border:1px solid #bcbcbc;border-radius:4px;background:#f0f0f0;box-shadow:inset 0 1px 0 #fff"></div><div style="position:absolute;left:1207px;top:735px;width:367px;height:20px;background:#ffb6c1;border-radius:3px 3px 0 0"></div><svg style="left:1208px;top:736.5px" width="17" height="17"><circle cx="8.5" cy="8.5" r="7.8" fill="#fff" stroke="#555" stroke-width="1.1"/><path d="M4.5 10.5L8.5 6.5L12.5 10.5" fill="none" stroke="#000" stroke-width="2"/></svg><div class="t" style="left:1231px;top:739.25px;font-size:10.6px;color:#000;font-weight:bold;">Display Histogram Stretch</div><svg style="left:1555px;top:740px" width="14" height="11"><rect x="0" y="0.5" width="13" height="2" fill="#222"/><rect x="0" y="4.5" width="13" height="2" fill="#222"/><rect x="0" y="8.5" width="13" height="2" fill="#222"/></svg><div style="position:absolute;left:1205px;top:756px;width:345px;height:81px;background:#000"></div><div style="position:absolute;left:1550px;top:756px;width:25px;height:81px;background:#000"></div><div style="position:absolute;left:1551px;top:757px;width:24px;height:26px;background:#e1e1e1;border:1px solid #adadad"></div><div style="position:absolute;left:1551px;top:785px;width:24px;height:25px;background:#e1e1e1;border:1px solid #adadad"></div><div style="position:absolute;left:1551px;top:812px;width:24px;height:25px;background:#e1e1e1;border:1px solid #adadad"></div><svg style="left:1552px;top:758px" width="22" height="24"><path d="M13 3L5 13h6l-3 8l9-11h-6l3-7z" fill="none" stroke="#222" stroke-width="1.3" stroke-linejoin="round"/></svg><svg style="left:1552px;top:786px" width="22" height="24"><path d="M6.5 9.5A6 6 0 1 1 6 15" fill="none" stroke="#222" stroke-width="1.4"/><path d="M4 6.5L6.8 10.3L10.5 8" fill="none" stroke="#222" stroke-width="1.4"/></svg><svg style="left:1552px;top:813px" width="22" height="24"><path d="M5 6h10l2 2v10H5z" fill="#333"/><rect x="8" y="6" width="6" height="4" fill="#e1e1e1"/><rect x="11.5" y="6.5" width="1.5" height="3" fill="#333"/></svg><svg style="left:0;top:0" width="1593" height="900"><defs><clipPath id="hc"><rect x="1205" y="756" width="345" height="81"/></clipPath></defs><g clip-path="url(#hc)"><path d="M1220 757V837" stroke="#8a8a3a" stroke-width="2" stroke-dasharray="6 4"/><path d="M1404.5 757V837" stroke="#8a8a3a" stroke-width="2" stroke-dasharray="6 4"/><path d="M1549.5 757V837" stroke="#8a8a3a" stroke-width="2" stroke-dasharray="6 4"/><path d="M1263 837L1330 818L1400 797L1470 779L1548 757.5" fill="none" stroke="#e8e830" stroke-width="1.2"/><path d="M1205 800.5 L1218 800 L1222 800 L1226 792 L1230 772 L1234 762 L1238 765 L1242 778 L1246 788 L1248 793.5 L1255 796.4 L1270 803.6 L1290 808.7 L1300 810.6 L1320 812.3 L1330 814.5 L1340 816.6 L1350 819.5 L1360 821 L1370 821 L1380 825.3 L1395 832 L1410 834 L1430 835.4 L1450 838" fill="none" stroke="#e00000" stroke-width="3.2" stroke-linejoin="round"/><path d="M1205 790 L1210 790 L1215 780 L1220 770 L1227 763 L1232 765 L1237 775 L1243 790 L1248 793.5 L1255 796.4 L1270 803.6 L1290 808.7 L1300 810.6 L1320 812.3 L1330 814.5 L1340 816.6 L1350 819.5 L1360 821 L1370 819 L1380 821 L1395 828 L1405 833 L1410 834 L1430 835.4 L1450 838" fill="none" stroke="#0010e0" stroke-width="3" stroke-linejoin="round"/><path d="M1205 799 L1218 799 L1223 800 L1227 790 L1231 768 L1234 760 L1238 770 L1243 787 L1248 793.5 L1255 796.4 L1270 803.6 L1290 808.7 L1300 810.6 L1320 812.3 L1330 814.5 L1340 816.6 L1350 819.5 L1360 821 L1370 821 L1380 825.3 L1395 832 L1410 834 L1430 835.4 L1450 838" fill="none" stroke="#008000" stroke-width="2.4" stroke-linejoin="round"/><path d="M1205 769 L1206 793.5 L1210 797 L1215 795.7 L1220 799.3 L1224 800.8 L1228 790.6 L1231 767.5 L1233.5 757.4 L1236 763 L1240 777.6 L1243 787.8 L1248 793.5 L1255 796.4 L1270 803.6 L1290 808.7 L1300 810.6 L1320 812.3 L1330 814.5 L1340 816.6 L1350 819.5 L1360 821 L1370 821 L1380 825.3 L1395 832 L1410 834 L1430 835.4 L1450 838" fill="none" stroke="#ffffff" stroke-width="1.8" stroke-linejoin="round"/><path d="M1546 837V826M1548 837V829" stroke="#0010e0" stroke-width="2"/></g></svg><div style="position:absolute;left:0px;top:735px;width:1197px;height:18px;background:linear-gradient(#b3cbe5,#9ebbdb)"></div><div class="t" style="left:3.4px;top:739.18px;font-size:11.2px;color:#0a1030;">Live Stack</div><svg style="left:1165px;top:740px" width="9" height="11"><path d="M2.5 0.5h4v5.5h1.5v1.2h-7V6h1.5z" fill="none" stroke="#000" stroke-width="1"/><rect x="5" y="1" width="1.3" height="5" fill="#000"/><path d="M4.5 7.2v3.5" stroke="#000" stroke-width="1.2"/></svg><svg style="left:1182px;top:741px" width="10" height="9"><path d="M0.5 0.5L9 8.5M9 0.5L0.5 8.5" stroke="#000" stroke-width="1.4"/></svg><div style="position:absolute;left:0px;top:753px;width:1197px;height:87px;background:#f0f0f0"></div><div style="position:absolute;left:-2px;top:761px;width:161px;height:59px;border:1px solid #d8d8d8;border-radius:3px;box-shadow:inset 1px 1px 0 #fff, 1px 1px 0 #fff"></div><div style="position:absolute;left:4px;top:754px;width:50px;height:12px;background:#f0f0f0"></div><div class="t" style="left:6px;top:754.52px;font-size:10.9px;color:#000;">Overview</div><div class="t" style="left:5.5px;top:769.13px;font-size:10.8px;color:#000;">Frames Stacked:</div><div class="t" style="left:92px;top:769.13px;font-size:10.8px;color:#000;">57</div><div class="t" style="left:5.5px;top:785.13px;font-size:10.8px;color:#000;">Frames Ignored:</div><div class="t" style="left:93px;top:785.13px;font-size:10.8px;color:#000;">15</div><div class="t" style="left:5.5px;top:801.13px;font-size:10.8px;color:#000;">Total Exposure:</div><div class="t" style="left:93px;top:801.13px;font-size:10.8px;color:#000;">19m 0s</div><div style="position:absolute;left:-2px;top:831px;width:161px;height:20px;border:1px solid #d8d8d8;border-radius:3px;box-shadow:inset 1px 1px 0 #fff"></div><div style="position:absolute;left:4px;top:823px;width:44px;height:12px;background:#f0f0f0"></div><div class="t" style="left:6px;top:823.32px;font-size:10.9px;color:#000;">Actions</div><div style="position:absolute;left:163px;top:761px;width:183px;height:90px;border:1px solid #d8d8d8;border-radius:3px;box-shadow:inset 1px 1px 0 #fff, 1px 1px 0 #fff"></div><div style="position:absolute;left:168px;top:754px;width:46px;height:12px;background:#f0f0f0"></div><div class="t" style="left:170.4px;top:754.52px;font-size:10.9px;color:#000;">Controls</div><div style="position:absolute;left:170px;top:769.5px;width:14px;height:13px;background:#fff;border:1px solid #333"></div><svg style="left:171px;top:770.5px" width="12" height="11"><path d="M2 5.5L4.6 8.5L10 1.8" fill="none" stroke="#000" stroke-width="2"/></svg><div class="t" style="left:189.2px;top:769.22px;font-size:10.9px;color:#000;">Align Frames</div><div style="position:absolute;left:170px;top:789px;width:14px;height:13px;background:#fff;border:1px solid #333"></div><div class="t" style="left:189.2px;top:788.72px;font-size:10.9px;color:#000;">FWHM Filter</div><div style="position:absolute;left:170px;top:808.3px;width:14px;height:13px;background:#fff;border:1px solid #333"></div><div class="t" style="left:189.2px;top:808.02px;font-size:10.9px;color:#000;">Brightness Filter</div><div style="position:absolute;left:170px;top:827.4px;width:14px;height:13px;background:#fff;border:1px solid #333"></div><svg style="left:171px;top:828.4px" width="12" height="11"><path d="M2 5.5L4.6 8.5L10 1.8" fill="none" stroke="#000" stroke-width="2"/></svg><div class="t" style="left:189.2px;top:827.12px;font-size:10.9px;color:#000;">Auto Save on Clear/Close</div><div style="position:absolute;left:348px;top:771px;width:849px;height:69px;border-left:1px solid #a0a0a0;background:#fff"></div><div style="position:absolute;left:350px;top:774px;width:771px;height:63px;background:#000"></div><div style="position:absolute;left:349.8px;top:755px;width:40.5px;height:17px;background:linear-gradient(#f2f2f2,#e6e6e6);border:1px solid #adadad;border-bottom:none"></div><div class="t" style="left:355px;top:756.92px;font-size:10.9px;color:#000;">Status</div><div style="position:absolute;left:455px;top:755px;width:59.299999999999955px;height:17px;background:linear-gradient(#f2f2f2,#e6e6e6);border:1px solid #adadad;border-bottom:none"></div><div class="t" style="left:460px;top:756.92px;font-size:10.9px;color:#000;">Alignment</div><div style="position:absolute;left:514.3px;top:755px;width:55.0px;height:17px;background:linear-gradient(#f2f2f2,#e6e6e6);border:1px solid #adadad;border-bottom:none"></div><div class="t" style="left:521.5px;top:756.92px;font-size:10.9px;color:#000;">Stacking</div><div style="position:absolute;left:569.3px;top:755px;width:79.70000000000005px;height:17px;background:linear-gradient(#f2f2f2,#e6e6e6);border:1px solid #adadad;border-bottom:none"></div><div class="t" style="left:576px;top:756.92px;font-size:10.9px;color:#000;">Enhancement</div><div style="position:absolute;left:649px;top:755px;width:50px;height:17px;background:linear-gradient(#f2f2f2,#e6e6e6);border:1px solid #adadad;border-bottom:none"></div><div class="t" style="left:655.7px;top:756.92px;font-size:10.9px;color:#000;">Guiding</div><div style="position:absolute;left:699px;top:755px;width:81.60000000000002px;height:17px;background:linear-gradient(#f2f2f2,#e6e6e6);border:1px solid #adadad;border-bottom:none"></div><div class="t" style="left:705.8px;top:756.92px;font-size:10.9px;color:#000;">Filter (FWHM)</div><div style="position:absolute;left:780.6px;top:755px;width:97.79999999999995px;height:17px;background:linear-gradient(#f2f2f2,#e6e6e6);border:1px solid #adadad;border-bottom:none"></div><div class="t" style="left:787.6px;top:756.92px;font-size:10.9px;color:#000;">Filter (Brightness)</div><div style="position:absolute;left:878.4px;top:755px;width:66.10000000000002px;height:17px;background:linear-gradient(#f2f2f2,#e6e6e6);border:1px solid #adadad;border-bottom:none"></div><div class="t" style="left:885.5px;top:756.92px;font-size:10.9px;color:#000;">Drift Graph</div><div style="position:absolute;left:944.5px;top:755px;width:31.0px;height:17px;background:linear-gradient(#f2f2f2,#e6e6e6);border:1px solid #adadad;border-bottom:none"></div><div class="t" style="left:951px;top:756.92px;font-size:10.9px;color:#000;">Log</div><div style="position:absolute;left:391px;top:753px;width:64px;height:21px;background:#fff;border:1px solid #adadad;border-bottom:none"></div><div class="t" style="left:398.5px;top:755.72px;font-size:10.9px;color:#000;">Histogram</div><svg style="left:0;top:0" width="1593" height="900"><defs><clipPath id="hc1"><rect x="350" y="774" width="771" height="63"/></clipPath></defs><g clip-path="url(#hc1)"><path d="M498 774V837" stroke="#f0f040" stroke-width="2.2" stroke-dasharray="6 3.5"/><path d="M682 774V837" stroke="#f0f040" stroke-width="2.2" stroke-dasharray="6 3.5"/><path d="M1120 774V837" stroke="#f0f040" stroke-width="1.5" stroke-dasharray="5 3"/><path d="M750.0 837.0 L753.7 835.6 L757.4 834.3 L761.1 833.0 L764.8 831.7 L768.5 830.4 L772.2 829.1 L775.9 827.9 L779.6 826.6 L783.3 825.4 L787.0 824.2 L790.7 823.0 L794.4 821.8 L798.1 820.6 L801.8 819.5 L805.5 818.4 L809.2 817.2 L812.9 816.1 L816.6 815.1 L820.3 814.0 L824.0 812.9 L827.7 811.9 L831.4 810.9 L835.1 809.9 L838.8 808.9 L842.5 807.9 L846.2 807.0 L849.9 806.0 L853.6 805.1 L857.3 804.2 L861.0 803.3 L864.7 802.4 L868.4 801.5 L872.1 800.7 L875.8 799.9 L879.5 799.0 L883.2 798.2 L886.9 797.4 L890.6 796.7 L894.3 795.9 L898.0 795.2 L901.7 794.4 L905.4 793.7 L909.1 793.0 L912.8 792.3 L916.5 791.6 L920.2 791.0 L923.9 790.3 L927.6 789.7 L931.3 789.1 L935.0 788.5 L938.7 787.9 L942.4 787.3 L946.1 786.8 L949.8 786.2 L953.5 785.7 L957.2 785.2 L960.9 784.7 L964.6 784.2 L968.3 783.7 L972.0 783.3 L975.7 782.8 L979.4 782.4 L983.1 782.0 L986.8 781.6 L990.5 781.2 L994.2 780.8 L997.9 780.4 L1001.6 780.1 L1005.3 779.7 L1009.0 779.4 L1012.7 779.1 L1016.4 778.8 L1020.1 778.5 L1023.8 778.2 L1027.5 777.9 L1031.2 777.7 L1034.9 777.4 L1038.6 777.2 L1042.3 777.0 L1046.0 776.8 L1049.7 776.6 L1053.4 776.4 L1057.1 776.3 L1060.8 776.1 L1064.5 776.0 L1068.2 775.8 L1071.9 775.7 L1075.6 775.6 L1079.3 775.5 L1083.0 775.4 L1086.7 775.3 L1090.4 775.2 L1094.1 775.2 L1097.8 775.1 L1101.5 775.1 L1105.2 775.1 L1108.9 775.0 L1112.6 775.0 L1116.3 775.0 L1120.0 775.0" fill="none" stroke="#d8d830" stroke-width="1.2"/><path d="M477.8 837 L505 818.3 L529.6 774.8 L546.3 837" fill="none" stroke="#4a7a20" stroke-width="1.3"/><path d="M476 837 L498 822 L505 816 L515 800" fill="none" stroke="#b02010" stroke-width="1.2"/><path d="M474.7 837 L505 783.6 L529.6 785.4 L545.9 837" fill="none" stroke="#0010e0" stroke-width="3"/><path d="M474.7 837 L505 783.6 L516 784.5 M521 786 L529.6 786 L545.9 837" fill="none" stroke="#e8e8ff" stroke-width="1"/></g></svg><div style="position:absolute;left:913px;top:780px;width:13px;height:13px;background:#7a7a7a;border:1px solid #5a5a5a"></div><svg style="left:914px;top:781px" width="11" height="11"><path d="M2 5L4.5 8.5L9.5 1.5" fill="none" stroke="#111" stroke-width="1.8"/></svg><div class="t" style="left:930.6px;top:778.71px;font-size:11.0px;color:#8a8a8a;">Logarithmic Horizontal Axis</div><div style="position:absolute;left:1069px;top:776px;width:25px;height:23px;background:#777"></div><div style="position:absolute;left:1096px;top:776px;width:24px;height:23px;background:#777"></div><svg style="left:1071px;top:777px" width="22" height="22"><path d="M13 2.5L5 12h6l-3 8l9-11h-6l3-6.5z" fill="none" stroke="#111" stroke-width="1.3" stroke-linejoin="round"/></svg><svg style="left:1098px;top:777px" width="22" height="22"><path d="M6 8.5A5.5 5.5 0 1 1 5.5 14" fill="none" stroke="#222" stroke-width="1.3"/><path d="M3.8 5.5L6.3 9.2L9.8 7" fill="none" stroke="#222" stroke-width="1.3"/></svg><div class="t" style="left:1105px;top:775px;font-size:11px;color:#fff;transform-origin:0 0;transform:translate(12px,0) rotate(90deg)">White Level</div><div style="position:absolute;left:1121px;top:774px;width:19px;height:63px;background:#ff0000"></div><div style="position:absolute;left:1140px;top:774px;width:18px;height:63px;background:#008000"></div><div style="position:absolute;left:1158px;top:774px;width:18px;height:63px;background:#0000ff"></div><div style="position:absolute;left:1176px;top:774px;width:6px;height:63px;background:#e02020"></div><div style="position:absolute;left:1182px;top:774px;width:6px;height:63px;background:#1a8a1a"></div><div style="position:absolute;left:1188px;top:774px;width:6px;height:63px;background:#2030e0"></div><div style="position:absolute;left:1129px;top:779px;width:4px;height:58px;background:#ffe0e0"></div><div style="position:absolute;left:1147px;top:779px;width:4px;height:58px;background:#d8f0d8"></div><div style="position:absolute;left:1165px;top:779px;width:4px;height:58px;background:#e0e0ff"></div><div style="position:absolute;left:1185px;top:779px;width:4px;height:58px;background:#d8f0d8"></div><div style="position:absolute;left:1194px;top:771px;width:3px;height:69px;background:#f0f0f0"></div><div style="position:absolute;left:0px;top:837px;width:1593px;height:23px;background:#f0f0f0"></div><div style="position:absolute;left:0px;top:840px;width:1593px;height:1px;background:#dcdcdc"></div><div style="position:absolute;left:0px;top:840px;width:427px;height:17px;border-top:1px solid #707070"></div><div class="t" style="left:2px;top:843.77px;font-size:11.3px;color:#000;">Previewing : 2487 frames (2 dropped) in 1:53:02,6, exposure 20,0s , last frame 21,5s</div><div style="position:absolute;left:427px;top:840px;width:5px;height:18px;background:#f0f0f0"></div><div style="position:absolute;left:428px;top:839px;width:198px;height:17px;border:1px solid #a8a8a8;border-right-color:#fff;border-bottom-color:#fff;background:#f0f0f0"></div><div class="t" style="left:432px;top:843.77px;font-size:11.3px;color:#000;">Memory: 6 of 101 frames in use.</div><div style="position:absolute;left:629px;top:839px;width:222px;height:17px;border:1px solid #a8a8a8;border-right-color:#fff;border-bottom-color:#fff;background:#f0f0f0"></div><div class="t" style="left:632px;top:843.77px;font-size:11.3px;color:#000;">Cooler: 19%, Temp: -10,0C, Target: -10,0C</div><div style="position:absolute;left:853px;top:839px;width:198px;height:17px;border:1px solid #a8a8a8;border-right-color:#fff;border-bottom-color:#fff;background:#f0f0f0"></div><div class="t" style="left:856px;top:843.77px;font-size:11.3px;color:#000;">57 Stacked, 15 Ignored, 19m 0s</div><div class="t" style="left:1376px;top:843.17px;font-size:11.3px;color:#000;">Frame:</div><div style="position:absolute;left:1417px;top:840px;width:100px;height:17px;background:#e6e6e6;border:1px solid #bcbcbc"></div><div style="position:absolute;left:1418px;top:841px;width:39px;height:15px;background:linear-gradient(#5fd85f,#2fbf2f 50%,#49cc49)"></div><div class="t" style="left:1521.5px;top:843.17px;font-size:11.3px;color:#000;">00:09/00:11</div><div style="position:absolute;left:0px;top:858px;width:1593px;height:2px;background:#f0f0f0"></div><div style="position:absolute;left:0px;top:860px;width:1593px;height:40px;background:#282a26"></div><div style="position:absolute;left:1131px;top:860px;width:121px;height:40px;background:#2a2c2b"></div><div style="position:absolute;left:1252px;top:860px;width:123px;height:40px;background:linear-gradient(90deg,#4f4f4f,#555250 60%,#6a5350)"></div><div style="position:absolute;left:1375px;top:860px;width:218px;height:40px;background:#432421"></div><svg style="left:13px;top:871px" width="17" height="18"><path d="M0 2.6L7 1.6V8.3H0z M8 1.5L16.5 0.3V8.3H8z M0 9.3H7V16L0 15z M8 9.3H16.5V17.3L8 16.2z" fill="#fff"/></svg><div style="position:absolute;left:45px;top:860px;width:344px;height:40px;background:#f2f2f2"></div><svg style="left:57px;top:871px" width="17" height="18"><circle cx="10.5" cy="6.5" r="5.3" fill="none" stroke="#222" stroke-width="1.4"/><path d="M6.8 10.3L1 16.5" stroke="#222" stroke-width="1.6"/></svg><div class="t" style="left:85.7px;top:873.28px;font-size:14.65px;color:#303030;">Taper ici pour rechercher</div><svg style="left:405px;top:872px" width="17" height="17"><circle cx="8" cy="8" r="6.8" fill="none" stroke="#fff" stroke-width="1.8"/></svg><svg style="left:452px;top:869px" width="21" height="22"><path d="M2 11C2 4.5 7 1 11.5 1C17 1 20 5 20 10.5V12.5H6.5C7 16.5 10 18 13 18C15.5 18 17.5 17 19 16V20C17 21 15 21.5 12.5 21.5C6 21.5 2 17.5 2 11z M6.8 9H15C14.8 6.5 13.2 5 11 5C8.8 5 7.2 6.5 6.8 9z" fill="#1a7fdc"/></svg><svg style="left:497px;top:870px" width="22" height="20"><path d="M0 2h8l2 2h12v15H0z" fill="#e8b640"/><rect x="0" y="5" width="22" height="14" fill="#f6d36a"/><path d="M6 19v-6h10v6h-3v-3h-4v3z" fill="#3c8ee0"/></svg><svg style="left:542px;top:867px" width="24" height="26"><defs><linearGradient id="fth" x1="0" y1="0" x2="1" y2="1"><stop offset="0" stop-color="#1e50c8"/><stop offset="0.5" stop-color="#38a8d8"/><stop offset="1" stop-color="#108a20"/></linearGradient></defs><rect x="1" y="3.7" width="21" height="20.3" rx="2" fill="#f8f8f8"/><path d="M1.5 2C5 0 9 2 12 7C14.5 11 16.5 16 18.5 20.5C14 18.5 9 15 5.5 11C3 8 1 5 1.5 2z" fill="url(#fth)"/><path d="M17 19L21 22" stroke="#405050" stroke-width="1"/></svg><svg style="left:587px;top:868px" width="25" height="25"><circle cx="12.3" cy="12.3" r="11" fill="#10202a" stroke="#2a9fe8" stroke-width="1.8"/><path d="M16.5 8.5A5.5 5.5 0 1 0 16 16" fill="none" stroke="#2a9fe8" stroke-width="2.6"/></svg><svg style="left:633px;top:868px" width="25" height="24"><ellipse cx="11" cy="10" rx="10" ry="6.5" fill="#f2f2f2" stroke="#c0404a" stroke-width="1.5" transform="rotate(-25 11 10)"/><ellipse cx="10" cy="14" rx="9" ry="3" fill="#b8a8a8" opacity="0.6"/><path d="M10 4L16 18M16 4L12 18" stroke="#3a8ad8" stroke-width="1.3"/><circle cx="15" cy="20" r="2.5" fill="none" stroke="#3a8ad8" stroke-width="1.3"/><circle cx="20" cy="17" r="2.5" fill="none" stroke="#3a8ad8" stroke-width="1.3"/></svg><svg style="left:678px;top:868px" width="25" height="25"><circle cx="12.3" cy="12.3" r="11.5" fill="#1a0606"/><path d="M3 18A11 11 0 0 0 22 18" fill="none" stroke="#d01818" stroke-width="2.5"/><path d="M8 16L17 5" stroke="#e02020" stroke-width="2.2"/><circle cx="8" cy="16" r="2.3" fill="#e02020"/></svg><svg style="left:723px;top:868px" width="24" height="24"><rect x="0" y="0" width="24" height="24" fill="#585858"/><path d="M12 1L14.5 7.5L22.5 9.5L16.5 14.5L18 22.5L12 18.5L5.5 22.5L7 14.5L1 9.5L9 7.5z" fill="#f0f0f0"/><path d="M13.5 7.5L9 7.5L7 14.5L5.5 22.5L10 17.5L11 11z" fill="#3a3a3a"/><path d="M14.5 7.5L22.5 9.5L16.5 14.5L18 22.5L12 18.5L11 11z" fill="#d8d8d8"/></svg><svg style="left:765px;top:868px" width="25" height="25"><path d="M12 1.5A11 11 0 1 0 22 17C17 21 8 20 5 14C2 8 7 2 12 1.5z" fill="#f08a20"/><path d="M13 3.5C18 3 22 6 22 11C22 14 20 16 17 16.5C12 17 8 14 8.5 9C9 6 11 4 13 3.5z" fill="#f5a040"/><path d="M9 9C12 9 18 11 22 12" stroke="#ffc070" stroke-width="1"/></svg><div class="t" style="left:794px;top:873.59px;font-size:12px;color:#fff;">CPWI 2.3.5</div><svg style="left:889px;top:868px" width="23" height="23"><rect x="0" y="0" width="23" height="23" rx="2" fill="#152030"/><path d="M11 2A6 6 0 1 0 17 10C15 12 10 12 8.5 9C7 6 9 3 11 2z" fill="#f08a20"/><path d="M11.5 3C14.5 3 16.5 5 16.5 8C16.5 9.5 15 10.5 13 10.5C10.5 10.5 9.5 8.5 9.8 6.5C10 4.5 10.5 3.5 11.5 3z" fill="#f5a040"/><text x="11.5" y="20" font-size="5.5" fill="#8ea0c0" text-anchor="middle" font-family="Liberation Sans">CPWI</text></svg><div class="t" style="left:917.2px;top:873.58px;font-size:12.1px;color:#fff;">Slew Controls</div><svg style="left:1012px;top:868px" width="23" height="23"><rect x="0" y="0" width="23" height="23" rx="2" fill="#152030"/><path d="M11 2A6 6 0 1 0 17 10C15 12 10 12 8.5 9C7 6 9 3 11 2z" fill="#f08a20"/><path d="M11.5 3C14.5 3 16.5 5 16.5 8C16.5 9.5 15 10.5 13 10.5C10.5 10.5 9.5 8.5 9.8 6.5C10 4.5 10.5 3.5 11.5 3z" fill="#f5a040"/><text x="11.5" y="20" font-size="5.5" fill="#8ea0c0" text-anchor="middle" font-family="Liberation Sans">CPWI</text></svg><div class="t" style="left:1040px;top:873.58px;font-size:12.1px;color:#fff;">Find Target</div><svg style="left:1137px;top:869px" width="21" height="22"><path d="M2 0h17a2 2 0 0 1 2 2v20l-5-4H2a2 2 0 0 1-2-2V2a2 2 0 0 1 2-2z" fill="#7289da"/><path d="M5 12C5 8 6.5 5.5 8 5L9 6.2C10 6 11 6 12 6.2L13 5C14.5 5.5 16 8 16 12C15 13.2 13.8 13.6 13 13.8L12.3 12.8C11 13.1 10 13.1 8.7 12.8L8 13.8C7.2 13.6 6 13.2 5 12z" fill="#fff"/><circle cx="8.7" cy="9.8" r="1.1" fill="#7289da"/><circle cx="12.3" cy="9.8" r="1.1" fill="#7289da"/></svg><div class="t" style="left:1164.3px;top:873.58px;font-size:12.1px;color:#fff;">Blabla Live St...</div><svg style="left:1260px;top:868px" width="24" height="24"><defs><radialGradient id="jp" cx="55%" cy="40%" r="60%"><stop offset="0" stop-color="#e0dcd8"/><stop offset="0.7" stop-color="#9a9490"/><stop offset="1" stop-color="#4a4644"/></radialGradient></defs><circle cx="12" cy="11" r="11" fill="url(#jp)"/><path d="M2 8H22M1.5 12H22.5M3 15.5H21" stroke="#8a8480" stroke-width="1" opacity="0.6"/><rect x="1" y="14" width="10" height="6" fill="#5fb8b0" stroke="#9ab" stroke-width="0.8" transform="rotate(-20 6 17)"/></svg><div class="t" style="left:1288.4px;top:873.58px;font-size:12.1px;color:#fff;">SharpCap Pr...</div><div style="position:absolute;left:762px;top:898px;width:114px;height:2px;background:#f0a8a8"></div><div style="position:absolute;left:885px;top:898px;width:115px;height:2px;background:#f0a8a8"></div><div style="position:absolute;left:1008px;top:898px;width:115px;height:2px;background:#f0a8a8"></div><div style="position:absolute;left:1131px;top:898px;width:115px;height:2px;background:#f0a8a8"></div><div style="position:absolute;left:1252px;top:898px;width:123px;height:2px;background:#f0a8a8"></div><svg style="left:1384px;top:874px" width="13" height="8"><path d="M0.5 7.5L6.5 1L12.5 7.5" fill="none" stroke="#fff" stroke-width="1.2"/></svg><svg style="left:1408px;top:872px" width="14" height="16"><rect x="1.5" y="3.5" width="8" height="8" rx="2" fill="none" stroke="#fff" stroke-width="1.1"/><path d="M9.5 6L13 4V11L9.5 9" fill="none" stroke="#fff" stroke-width="1.1"/><path d="M1 1.5h8M1 14.5h8" stroke="#fff" stroke-width="1"/></svg><svg style="left:1429px;top:873px" width="18" height="13"><rect x="5.5" y="2.5" width="11" height="8" fill="none" stroke="#fff" stroke-width="1.1"/><rect x="7" y="4" width="8" height="5" fill="#fff"/><rect x="16.5" y="5" width="1.5" height="3" fill="#fff"/><path d="M0 6.5H5M2 3V10" stroke="#fff" stroke-width="1.2"/></svg><svg style="left:1453px;top:872px" width="18" height="15"><path d="M1 5H4L8 1.5V13.5L4 10H1z" fill="none" stroke="#fff" stroke-width="1.1"/><path d="M10.5 4.5Q12 7.5 10.5 10.5M13 3Q15.5 7.5 13 12M15.5 1.5Q19 7.5 15.5 13.5" fill="none" stroke="#bbb" stroke-width="1"/></svg><div class="t" style="left:1494.8px;top:865.37px;font-size:11.3px;color:#fff;">23:35</div><div class="t" style="left:1480px;top:881.35px;font-size:11.5px;color:#fff;">12/04/2021</div><svg style="left:1555px;top:869px" width="26" height="26"><path d="M1.5 1.5H17.5V13.5H8L4.5 17V13.5H1.5z" fill="none" stroke="#fff" stroke-width="1.3"/><path d="M4.5 5H14.5M4.5 8H14.5M4.5 11H11" stroke="#fff" stroke-width="1"/><circle cx="18" cy="18" r="7" fill="#432421" stroke="#fff" stroke-width="1.1"/><text x="18" y="22.3" font-size="11.5" fill="#fff" text-anchor="middle" font-family="Liberation Sans">1</text></svg>
</body></html>
